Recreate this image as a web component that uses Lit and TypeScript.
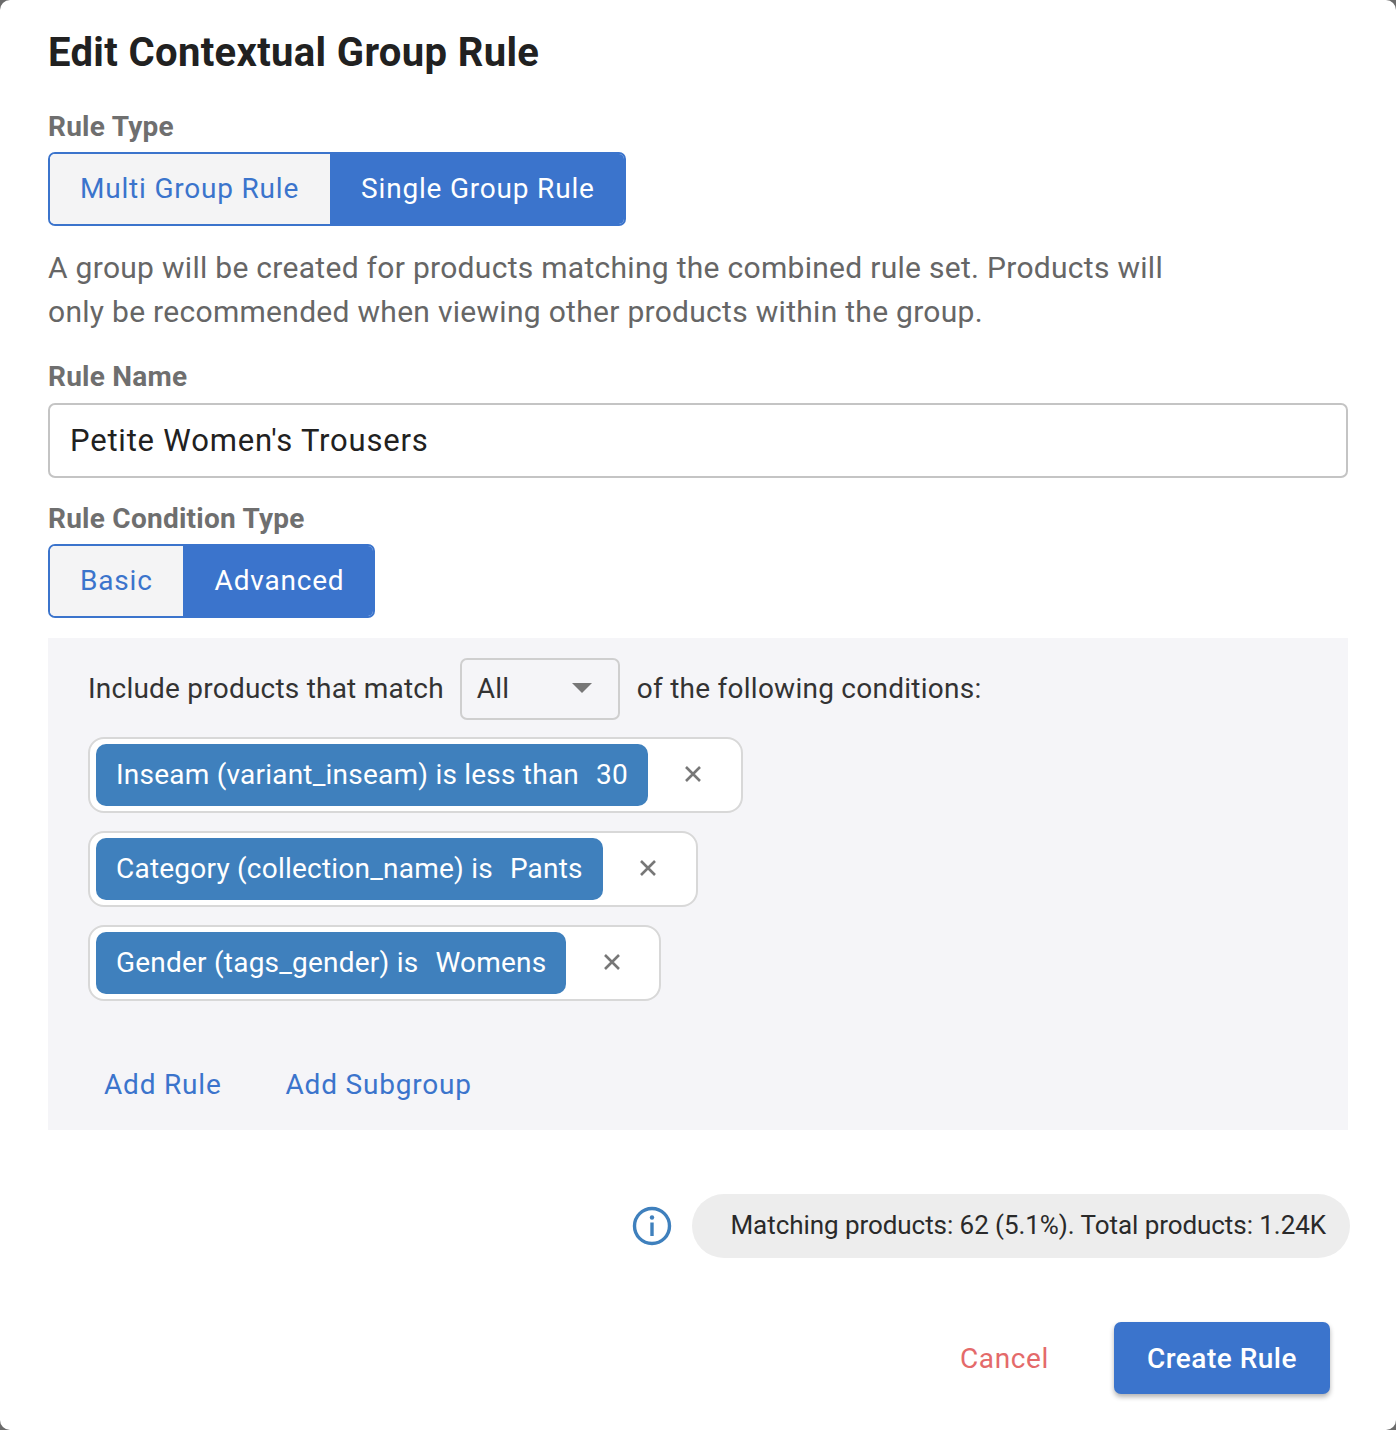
import { LitElement, html, css } from "lit";
import { customElement } from "lit/decorators.js";

const rules = [
  { text: "Inseam (variant_inseam) is less than", value: "30" },
  { text: "Category (collection_name) is", value: "Pants" },
  { text: "Gender (tags_gender) is", value: "Womens" },
];

@customElement("app-root")
export class AppRoot extends LitElement {
  static styles = css`
    :host { display: block; width: 1396px; height: 1430px; background: #6b6b6b; font-family: Roboto, "Liberation Sans", sans-serif; }
    * { box-sizing: border-box; }
    .modal { width: 1396px; height: 1430px; background: #fff; border-radius: 10px; padding: 30px 48px 0; display: flex; flex-direction: column; overflow: hidden; }
    h1 { margin: 0; font-size: 40px; line-height: 46px; font-weight: 700; color: #212121; height: 46px; letter-spacing: 0.35px; }
    .label { font-size: 28px; line-height: 34px; font-weight: 700; color: #6f6f6f; height: 34px; letter-spacing: 0.25px; }
    .lbl1 { margin-top: 34px; height: 33px; }
    .toggle { display: inline-flex; align-self: flex-start; height: 74px; margin-top: 9px; border: 2px solid #3b74cc; border-radius: 7px; overflow: hidden; font-size: 28px; letter-spacing: 0.8px; }
    .toggle span { display: flex; align-items: center; height: 100%; padding-bottom: 2px; }
    .toggle.second { margin-top: 8px; }
    .off { background: #f4f4f5; color: #3b74cc; padding: 0 30.5px 0 30px; }
    .on { background: #3b74cc; color: #fff; padding: 0 29px 0 31.5px; }
    .desc { margin: 20px 0 0; font-size: 30px; line-height: 44px; color: #666; width: 1150px; letter-spacing: 0.29px; }
    .lbl2 { margin-top: 26px; }
    .input { height: 75px; margin-top: 9px; border: 2px solid #c4c4c4; border-radius: 7px; padding: 0 20px; display: flex; align-items: center; font-size: 31px; color: #212121; letter-spacing: 0.8px; }
    .lbl3 { margin-top: 24px; }
    .panel { margin-top: 20px; height: 492px; background: #f5f5f8; padding: 20px 40px 0; display: flex; flex-direction: column; }
    .match { display: flex; align-items: center; height: 62px; font-size: 28px; color: #333; gap: 16px; letter-spacing: 0.25px; }
    .match > span { padding-bottom: 2px; }
    .before { letter-spacing: 0.22px; }
    .after { margin-left: 1px; }
    .select { width: 160px; height: 62px; border: 2px solid #cfcfcf; border-radius: 7px; padding: 0 15px 2px; display: flex; align-items: center; justify-content: space-between; color: #333; }
    .select svg { margin-right: 11px; }
    .rules { margin-top: 17px; display: flex; flex-direction: column; gap: 18px; align-items: flex-start; }
    .rule { height: 76px; background: #fff; border: 2px solid #d8d8d8; border-radius: 16px; padding: 5px 6px; display: flex; align-items: center; }
    .chip { height: 62px; padding: 0 20px 2px; background: #3f80bd; border-radius: 10px; color: #fff; font-size: 28px; display: flex; align-items: center; gap: 17px; white-space: nowrap; letter-spacing: 0.22px; }
    .x { width: 87px; padding: 0 5px 2px 9px; display: flex; justify-content: center; }
    .links { display: flex; gap: 64px; margin-top: 67px; padding-left: 16px; font-size: 28px; color: #3b74cc; letter-spacing: 0.8px; }
    .status { display: flex; justify-content: flex-end; align-items: center; gap: 20px; margin: 64px -2px 0 0; }
    .pill { height: 64px; padding: 0 24px 2px 38px; border-radius: 32px; background: #ededed; font-size: 26px; color: #2a2a2a; display: flex; align-items: center; letter-spacing: -0.06px; }
    .actions { display: flex; justify-content: flex-end; align-items: center; margin: 64px 18px 0 0; }
    .cancel { font-size: 28px; color: #e46a6a; margin-right: 65px; letter-spacing: 0.6px; }
    .create { height: 72px; padding: 0 33px; background: #3b74cc; color: #fff; border-radius: 7px; font-size: 28px; font-weight: 500; display: flex; align-items: center; box-shadow: 0 3px 5px rgba(0,0,0,.3); letter-spacing: 0.5px; }
  `;

  render() {
    return html`
      <div class="modal">
        <h1>Edit Contextual Group Rule</h1>
        <div class="label lbl1">Rule Type</div>
        <div class="toggle"><span class="off">Multi Group Rule</span><span class="on">Single Group Rule</span></div>
        <p class="desc">A group will be created for products matching the combined rule set. Products will only be recommended when viewing other products within the group.</p>
        <div class="label lbl2">Rule Name</div>
        <div class="input">Petite Women's Trousers</div>
        <div class="label lbl3">Rule Condition Type</div>
        <div class="toggle second"><span class="off">Basic</span><span class="on">Advanced</span></div>
        <div class="panel">
          <div class="match">
            <span class="before">Include products that match</span>
            <div class="select">All<svg width="20" height="10" viewBox="0 0 20 10"><path d="M0 0h20L10 10z" fill="#777"/></svg></div>
            <span class="after">of the following conditions:</span>
          </div>
          <div class="rules">
            ${rules.map((r) => html`
              <div class="rule">
                <div class="chip"><span>${r.text}</span><span>${r.value}</span></div>
                <div class="x"><svg width="18" height="18" viewBox="0 0 18 18"><path d="M2 2l14 14M16 2L2 16" stroke="#777" stroke-width="2.6" fill="none"/></svg></div>
              </div>`)}
          </div>
          <div class="links"><span>Add Rule</span><span>Add Subgroup</span></div>
        </div>
        <div class="status">
          <svg width="40" height="40" viewBox="0 0 40 40"><circle cx="20" cy="20" r="17.5" fill="none" stroke="#3f80bd" stroke-width="3.4"/><circle cx="20" cy="11.5" r="2.2" fill="#3f80bd"/><rect x="18.3" y="16.5" width="3.4" height="13.5" fill="#3f80bd"/></svg>
          <div class="pill">Matching products: 62 (5.1%). Total products: 1.24K</div>
        </div>
        <div class="actions"><span class="cancel">Cancel</span><div class="create">Create Rule</div></div>
      </div>
    `;
  }
}
